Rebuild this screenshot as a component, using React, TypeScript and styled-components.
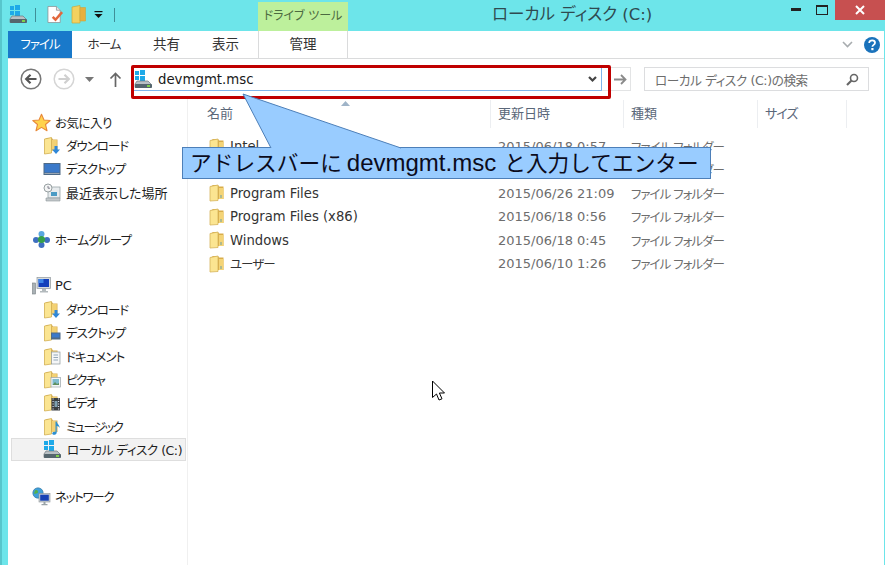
import React from "react";
import styled, { createGlobalStyle } from "styled-components";

const GlobalStyle = createGlobalStyle`
  html, body {
    margin: 0;
    padding: 0;
    overflow: hidden;
    background: #6de5ea;
  }
  body {
    font-family: "DejaVu Sans", "Noto Sans CJK JP", sans-serif;
    font-feature-settings: "palt";
    font-size: 13px;
    color: #222;
  }
  svg {
    flex: none;
  }
`;

const Page = styled.div`
  position: relative;
  width: 885px;
  height: 565px;
  box-sizing: border-box;
  border-left: 2px solid #57c6cc;
  background: #6de5ea;
  display: flex;
  flex-direction: column;
  overflow: hidden;
`;

const TitleBar = styled.div`
  height: 31px;
  flex: none;
  display: flex;
  align-items: flex-start;
  position: relative;
`;

const QuickAccess = styled.div`
  width: 256px;
  height: 29px;
  flex: none;
  display: flex;
  align-items: center;
  padding-left: 7px;
  box-sizing: border-box;
`;

const QuickSeparator = styled.span<{ $ml: number; $mr: number }>`
  width: 1px;
  height: 14px;
  background: #3f8f98;
  margin-left: ${({ $ml }) => $ml}px;
  margin-right: ${({ $mr }) => $mr}px;
`;

const QuickGap = styled.span<{ $w: number }>`
  width: ${({ $w }) => $w}px;
`;

const ContextTab = styled.div`
  width: 90px;
  height: 29px;
  margin-top: 2px;
  background: #bdf09c;
  color: #4c6a40;
  font-size: 12px;
  text-align: center;
  line-height: 28px;
`;

const Title = styled.div`
  width: 161px;
  margin-left: 144px;
  font-size: 16.5px;
  line-height: 30px;
  color: #2f4a50;
  white-space: nowrap;
`;

const CaptionGroup = styled.div`
  margin-left: auto;
  display: flex;
  align-items: flex-start;
`;

const CaptionButton = styled.div<{ $w: number; $close?: boolean }>`
  width: ${({ $w }) => $w}px;
  height: 20px;
  display: flex;
  align-items: center;
  justify-content: center;
  background: ${({ $close }) => ($close ? "#c75050" : "transparent")};
`;

const Body = styled.div`
  flex: 1;
  margin-left: 6px;
  margin-right: 1px;
  background: #fff;
  display: flex;
  flex-direction: column;
  min-height: 0;
`;

const TabStrip = styled.div`
  height: 27px;
  flex: none;
  display: flex;
  align-items: stretch;
  border-bottom: 1px solid #dadbdc;
  padding-right: 4px;
`;

const Tab = styled.div<{ $w: number; $tight?: number; $active?: boolean; $context?: boolean }>`
  width: ${({ $w }) => $w}px;
  flex: none;
  text-align: center;
  line-height: 27px;
  font-size: ${({ $tight }) => ($tight ? 12.5 : 13.5)}px;
  letter-spacing: ${({ $tight }) => $tight ?? 0}px;
  box-sizing: border-box;
  color: ${({ $active }) => ($active ? "#fff" : "#333")};
  background: ${({ $active }) => ($active ? "#1979ca" : "transparent")};
  margin-left: ${({ $context }) => ($context ? 4 : 0)}px;
  border-left: ${({ $context }) => ($context ? "1px solid #dadbdc" : "none")};
  border-right: ${({ $context }) => ($context ? "1px solid #dadbdc" : "none")};
`;

const TabTools = styled.div`
  margin-left: auto;
  display: flex;
  align-items: center;
  gap: 11px;
`;

const Toolbar = styled.div`
  height: 40px;
  flex: none;
  display: flex;
  align-items: center;
  padding-left: 12px;
`;

const NavIcon = styled.span<{ $w: number; $mr: number }>`
  width: ${({ $w }) => $w}px;
  margin-right: ${({ $mr }) => $mr}px;
  flex: none;
  display: flex;
  justify-content: center;
`;

const AddressBox = styled.div`
  position: relative;
  width: 470px;
  height: 24px;
  box-sizing: border-box;
  border: 1px solid #7eb4ea;
  flex: none;
  display: flex;
  align-items: center;
  padding-left: 1px;
  font-size: 13.3px;
  color: #1a1a1a;
`;

const AddressText = styled.span`
  margin-left: 5px;
`;

const AddressChevron = styled.span`
  margin-left: auto;
  margin-right: 4px;
  display: flex;
`;

const RedFrame = styled.div`
  position: absolute;
  left: -2px;
  top: -3px;
  width: 480px;
  height: 34px;
  box-sizing: border-box;
  border: 3.5px solid #c00000;
  border-radius: 2px;
`;

const GoButton = styled.div`
  width: 29px;
  height: 24px;
  flex: none;
  box-sizing: border-box;
  border: 1px solid #e3e4e5;
  border-left: none;
  display: flex;
  align-items: center;
  justify-content: flex-end;
  padding-right: 3px;
`;

const SearchBox = styled.div`
  width: 225px;
  height: 24px;
  margin-left: 13px;
  flex: none;
  box-sizing: border-box;
  border: 1px solid #dcdddf;
  display: flex;
  align-items: center;
  justify-content: space-between;
  padding: 0 9px 0 10px;
  color: #6d6d6d;
  font-size: 12.6px;
  letter-spacing: -0.4px;
  white-space: nowrap;
`;

const Content = styled.div`
  flex: 1;
  display: flex;
  min-height: 0;
`;

const NavPane = styled.div`
  width: 180px;
  flex: none;
  border-right: 1px solid #f0f0f0;
  padding-top: 11.5px;
  box-sizing: border-box;
`;

const NavRow = styled.div<{ $level?: number; $selected?: boolean }>`
  height: 23.4px;
  box-sizing: border-box;
  display: flex;
  align-items: center;
  gap: ${({ $level }) => ($level ? 5 : 4)}px;
  margin-left: 3px;
  margin-right: 1px;
  padding-left: ${({ $level }) => ($level ? 32 : 21)}px;
  white-space: nowrap;
  color: #1e1e1e;
  background: ${({ $selected }) => ($selected ? "#f2f2f2" : "transparent")};
  outline: ${({ $selected }) => ($selected ? "1px solid #dedede" : "none")};
  outline-offset: -1px;
`;

const NavLabel = styled.span<{ $tight?: number }>`
  font-size: ${({ $tight }) => ($tight ? 12.5 : 13)}px;
  letter-spacing: ${({ $tight }) => $tight ?? 0}px;
`;

const NavGap = styled.div`
  height: 23.4px;
`;

const FileArea = styled.div`
  flex: 1;
  min-width: 0;
`;

const columns = "303px 133px 134px 89px";

const HeaderRow = styled.div`
  position: relative;
  display: grid;
  grid-template-columns: ${columns};
  height: 27px;
  margin-top: 1px;
  color: #5a6779;
  font-size: 13px;
`;

const HeaderCell = styled.div<{ $first?: boolean; $tight?: boolean }>`
  padding-left: ${({ $first }) => ($first ? 19 : 7)}px;
  line-height: 28px;
  letter-spacing: ${({ $tight }) => ($tight ? -1 : 0)}px;
  border-right: 1px solid #eceef1;
`;

const SortArrow = styled.svg`
  position: absolute;
  left: 153px;
  top: 1px;
`;

const FileRows = styled.div`
  padding-top: 7.9px;
`;

const FileRow = styled.div`
  display: grid;
  grid-template-columns: ${columns};
  height: 23.4px;
  align-items: center;
  white-space: nowrap;
`;

const NameCell = styled.div`
  display: flex;
  align-items: center;
  gap: 5px;
  padding-left: 21px;
  color: #333;
  font-size: 13.2px;
`;

const KanaName = styled.span`
  font-size: 12.5px;
  letter-spacing: -1px;
`;

const DateCell = styled.div`
  padding-left: 7px;
  color: #6d6d6d;
`;

const TypeCell = styled(DateCell)`
  font-size: 12.5px;
  letter-spacing: -1px;
`;

const Callout = styled.div`
  position: absolute;
  left: 180px;
  top: 147px;
  width: 529px;
  height: 32px;
  box-sizing: border-box;
  border: 1px solid #4d7fb8;
  background: #99ccff;
  color: #0b0b1c;
  font-family: "Liberation Sans", "Noto Sans CJK JP", sans-serif;
  font-feature-settings: normal;
  font-size: 21.7px;
  line-height: 29px;
  padding-left: 7px;
  white-space: nowrap;
`;

const CalloutLatin = styled.span`
  font-size: 24px;
  padding: 0 8px 0 5px;
`;

const CalloutTail = styled.svg`
  position: absolute;
  left: 58px;
  top: -55px;
  overflow: visible;
`;

const Cursor = styled.svg`
  position: absolute;
  left: 429px;
  top: 380px;
`;

const Windows = ({ x = 0, y = 0, s = 4 }: { x?: number; y?: number; s?: number }) => (
  <g fill="#1ea9e8">
    <rect x={x} y={y} width={s} height={s} />
    <rect x={x + s + 1} y={y - 1} width={s + 1} height={s + 1} />
    <rect x={x} y={y + s + 1} width={s} height={s} />
    <rect x={x + s + 1} y={y + s + 1} width={s + 1} height={s + 1} />
  </g>
);

const DriveIcon = () => (
  <svg width="19" height="19" viewBox="0 0 19 19">
    <Windows x={1} y={1} s={4} />
    <path d="M3 11h11l3 3v3.5H1V14z" fill="#b9c0c4" stroke="#6d777c" strokeWidth=".7" />
    <rect x="1" y="14" width="17" height="4" rx="1" fill="#55666e" />
    <rect x="13" y="15" width="3" height="2" fill="#7fd04b" />
  </svg>
);

const FolderIcon = ({ children }: { children?: React.ReactNode }) => (
  <svg width="18" height="19" viewBox="0 0 18 19">
    <path d="M2 3.500 4 2h5l1 1.500h4.500V15H2z" fill="#d9ae52" />
    <path d="M1.500 3 8.500 1.500v15.500L1.500 18z" fill="#fbe592" stroke="#d2ae52" strokeWidth=".8" />
    <path d="M9 4h4.800v11H9z" fill="#f3d173" />
    {children}
  </svg>
);

const FileFolder = () => (
  <svg width="16" height="18" viewBox="0 0 16 18">
    <path d="M2 2.500 4 1h5l1 1.500h4.500V15H2z" fill="#d9ad4a" />
    <path d="M1 2.500 9 1v15.500L1 17z" fill="#fbe591" stroke="#d6b45c" strokeWidth=".8" />
    <path d="M10 4h4.500v11H10z" fill="#f4d477" />
    <rect x="11.500" y="11" width="1" height="3" fill="#6aa0a8" />
  </svg>
);

const StarIcon = () => (
  <svg width="19" height="19" viewBox="0 0 19 19">
    <path d="M9.500 1.200 12 7l6.200.5-4.700 4 1.500 6.200-5.500-3.300L4 17.700l1.500-6.200-4.700-4L7 7z" fill="#ffd34d" stroke="#e8893a" strokeWidth="1.100" strokeLinejoin="round" />
  </svg>
);

const DesktopIcon = () => (
  <svg width="18" height="19" viewBox="0 0 18 19">
    <rect x="0.500" y="4" width="17" height="12" fill="#4e6a86" />
    <rect x="1.500" y="5" width="15" height="8.500" fill="#3b79c9" />
    <rect x="1.500" y="14" width="15" height="1" fill="#9aa6b2" />
  </svg>
);

const RecentIcon = () => (
  <svg width="18" height="19" viewBox="0 0 18 19">
    <rect x="5" y="4" width="12" height="11" fill="#e8ecee" stroke="#9aa5a8" strokeWidth=".8" />
    <rect x="8" y="9" width="6" height="4" fill="#4b9bc4" />
    <circle cx="5" cy="5" r="4" fill="#f3f4f4" stroke="#8d9699" strokeWidth=".9" />
    <path d="M5 3v2.200h2" fill="none" stroke="#667" strokeWidth=".8" />
    <path d="M3 15h14v3H3z" fill="#c3c8ca" stroke="#8f979a" strokeWidth=".6" />
  </svg>
);

const HomeGroupIcon = () => (
  <svg width="19" height="19" viewBox="0 0 19 19">
    <circle cx="9.500" cy="4" r="3" fill="#5aa7e0" />
    <circle cx="4" cy="10" r="3" fill="#3e6fc0" />
    <circle cx="15" cy="10" r="3" fill="#3e6fc0" />
    <circle cx="9.500" cy="15" r="3" fill="#3e6fc0" />
    <circle cx="9.500" cy="9.500" r="3.600" fill="#35a04a" />
  </svg>
);

const PcIcon = () => (
  <svg width="19" height="19" viewBox="0 0 19 19">
    <rect x="0.500" y="7" width="3" height="11" fill="#a9b1b5" stroke="#777f83" strokeWidth=".6" />
    <rect x="5" y="1.500" width="13.500" height="11" fill="#d8dcdf" stroke="#90989c" strokeWidth=".7" />
    <rect x="6.500" y="3" width="10.500" height="8" fill="#1440bb" />
    <rect x="6.500" y="3" width="5" height="4" fill="#3e86e8" />
    <path d="M10 13h4v2h2v1.500H8V15h2z" fill="#b3babd" />
  </svg>
);

const NetworkIcon = () => (
  <svg width="19" height="19" viewBox="0 0 19 19">
    <circle cx="6" cy="6" r="5.200" fill="#3f9fd8" stroke="#2d6f9c" strokeWidth=".6" />
    <path d="M3 3.500c2-1 3 0 3 1.500S3.500 7 2 6.500zM7 7.500l3-1 .5 3-3 1z" fill="#56b04a" />
    <rect x="7" y="6.500" width="11" height="8.500" fill="#ccd2d5" stroke="#8a9296" strokeWidth=".6" />
    <rect x="8.200" y="7.700" width="8.600" height="6" fill="#1742b5" />
    <path d="M11.500 15h2v2h2v1.200h-6V17h2z" fill="#9aa3a7" />
  </svg>
);

const DownloadOverlay = () => (
  <path d="M11.500 10h3v3.500H17L13 18l-4-4.500h2.500z" fill="#2f87d8" />
);
const DesktopOverlay = () => (
  <g>
    <rect x="8" y="9.500" width="9.500" height="7" fill="#4e6a86" />
    <rect x="9" y="10.500" width="7.500" height="4" fill="#3b79c9" />
  </g>
);
const DocOverlay = () => (
  <g>
    <rect x="8.500" y="5" width="8.500" height="12" fill="#f5f6f7" stroke="#8e979c" strokeWidth=".7" />
    <path d="M10.500 8h4.500M10.500 10.500h4.500M10.500 13h4.500" stroke="#8ba0b0" strokeWidth=".9" />
  </g>
);
const PictureOverlay = () => (
  <g>
    <rect x="8" y="7.500" width="9.500" height="9.500" fill="#f4f6f7" stroke="#9aa3a8" strokeWidth=".7" />
    <rect x="9.500" y="9" width="6.500" height="6" fill="#7fbccf" />
    <path d="M9.500 15l2.500-3 2 2 2-1v2z" fill="#5f8f5f" />
  </g>
);
const VideoOverlay = () => (
  <g>
    <rect x="8.500" y="5" width="8.500" height="12.500" fill="#3a3f42" />
    <path d="M9.500 6h1.200M9.500 8.500h1.200M9.500 11h1.200M9.500 13.500h1.200M9.500 16h1.200M15 6h1.200M15 8.500h1.200M15 11h1.200M15 13.500h1.200M15 16h1.200" stroke="#dde" strokeWidth="1" />
    <rect x="11.500" y="8" width="3" height="6" fill="#7ea0b0" />
  </g>
);
const MusicOverlay = () => (
  <path d="M12.500 4.500h1.200c.3 2.500 3 3.500 3 6.500-.7-1.200-1.500-1.800-3-2v6.500c0 1.700-2 2.700-3.500 2.200-1.600-.6-1.200-2.700.8-3 .6-.1 1-.1 1.500.1z" fill="#2d8fd0" />
);

const rows = [
  { name: "Intel", date: "2015/06/18 0:57" },
  { name: "PerfLogs", date: "2013/08/22 23:52" },
  { name: "Program Files", date: "2015/06/26 21:09" },
  { name: "Program Files (x86)", date: "2015/06/18 0:56" },
  { name: "Windows", date: "2015/06/18 0:45" },
  { name: "ユーザー", date: "2015/06/10 1:26", kana: true },
];

const App = () => (
  <Page>
    <GlobalStyle />
    <TitleBar>
      <QuickAccess>
        <DriveIcon />
        <QuickSeparator $ml={7} $mr={11} />
        <svg width="17" height="19" viewBox="0 0 18 19">
          <path d="M1 1h9l4 4v13H1z" fill="#fff" stroke="#8a8f92" strokeWidth=".8" />
          <path d="M10 1v4h4" fill="#e6e8ea" stroke="#8a8f92" strokeWidth=".8" />
          <path d="M6 12l3 3 7-8" fill="none" stroke="#e2673c" strokeWidth="2.600" />
        </svg>
        <QuickGap $w={7} />
        <svg width="16" height="19" viewBox="0 0 16 19">
          <path d="M1 2 9 0.500v17.500L1 18z" fill="#f3d15f" stroke="#c9a63d" strokeWidth=".7" />
          <path d="M9 2.500h5.500V16H9z" fill="#e7b03f" stroke="#c9a63d" strokeWidth=".6" />
        </svg>
        <QuickGap $w={6} />
        <svg width="11" height="10" viewBox="0 0 11 10">
          <rect x="1.500" y="1" width="8" height="1.200" fill="#111" />
          <path d="M1.500 4h8l-4 4z" fill="#111" />
        </svg>
        <QuickSeparator $ml={10} $mr={0} />
      </QuickAccess>
      <ContextTab>ドライブ ツール</ContextTab>
      <Title>ローカル ディスク (C:)</Title>
      <CaptionGroup>
        <CaptionButton $w={27}>
          <svg width="10" height="4" viewBox="0 0 10 4"><rect width="10" height="3" fill="#222" /></svg>
        </CaptionButton>
        <CaptionButton $w={26}>
          <svg width="12" height="10" viewBox="0 0 12 10"><rect x=".5" y=".5" width="11" height="9" fill="none" stroke="#222" /><rect width="12" height="2" fill="#222" /></svg>
        </CaptionButton>
        <CaptionButton $w={50} $close>
          <svg width="10" height="10" viewBox="0 0 10 10"><path d="M1 1l8 8M9 1l-8 8" stroke="#fff" strokeWidth="2" /></svg>
        </CaptionButton>
      </CaptionGroup>
    </TitleBar>
    <Body>
      <TabStrip>
        <Tab $w={64} $active $tight={-1}>ファイル</Tab>
        <Tab $w={64} $tight={-1}>ホーム</Tab>
        <Tab $w={61}>共有</Tab>
        <Tab $w={57}>表示</Tab>
        <Tab $w={90} $context>管理</Tab>
        <TabTools>
          <svg width="11" height="7" viewBox="0 0 11 7"><path d="M1 1l4.500 4.500L10 1" fill="none" stroke="#a8acaf" strokeWidth="1.600" /></svg>
          <svg width="16" height="16" viewBox="0 0 16 16">
            <circle cx="8" cy="8" r="8" fill="#1a72bb" />
            <path d="M5.200 6c0-1.700 1.300-2.700 3-2.700s2.800 1 2.800 2.400c0 2.200-2.600 2.100-2.600 4" fill="none" stroke="#fff" strokeWidth="1.800" />
            <rect x="7.300" y="11" width="2.200" height="2.200" fill="#fff" />
          </svg>
        </TabTools>
      </TabStrip>
      <Toolbar>
        <NavIcon $w={22} $mr={11}>
          <svg width="22" height="22" viewBox="0 0 22 22">
            <circle cx="11" cy="11" r="9.800" fill="#fff" stroke="#777" strokeWidth="1.500" />
            <path d="M16.500 11H7M10.500 6.800 6.200 11l4.300 4.200" fill="none" stroke="#555" strokeWidth="2.200" />
          </svg>
        </NavIcon>
        <NavIcon $w={22} $mr={8}>
          <svg width="22" height="22" viewBox="0 0 22 22">
            <circle cx="11" cy="11" r="9.800" fill="#fff" stroke="#d5d5d5" strokeWidth="1.500" />
            <path d="M5.500 11H15M11.500 6.800l4.300 4.200-4.300 4.200" fill="none" stroke="#d0d0d0" strokeWidth="2.200" />
          </svg>
        </NavIcon>
        <NavIcon $w={12} $mr={13}>
          <svg width="9" height="5" viewBox="0 0 9 5"><path d="M0 0h9L4.500 5z" fill="#777" /></svg>
        </NavIcon>
        <NavIcon $w={14} $mr={10}>
          <svg width="13" height="15" viewBox="0 0 13 15">
            <path d="M6.500 15V2M1.500 6.500l5-5 5 5" fill="none" stroke="#666" strokeWidth="1.700" />
          </svg>
        </NavIcon>
        <AddressBox>
          <DriveIcon />
          <AddressText>devmgmt.msc</AddressText>
          <AddressChevron>
            <svg width="9" height="7" viewBox="0 0 9 7"><path d="M1 1l3.500 3.500L8 1" fill="none" stroke="#444" strokeWidth="2.200" /></svg>
          </AddressChevron>
          <RedFrame />
        </AddressBox>
        <GoButton>
          <svg width="13" height="11" viewBox="0 0 13 11"><path d="M0 5.500h11M7 1l4.500 4.500L7 10" fill="none" stroke="#8a8a8a" strokeWidth="1.800" /></svg>
        </GoButton>
        <SearchBox>
          <span>ローカル ディスク (C:)の検索</span>
          <svg width="13" height="13" viewBox="0 0 13 13">
            <circle cx="8" cy="5" r="3.500" fill="none" stroke="#666" strokeWidth="1.600" />
            <path d="M5.500 7.500 1 12" stroke="#666" strokeWidth="2.200" />
          </svg>
        </SearchBox>
      </Toolbar>
      <Content>
        <NavPane>
          <NavRow><StarIcon /><NavLabel $tight={-0.5}>お気に入り</NavLabel></NavRow>
          <NavRow $level={1}><FolderIcon><DownloadOverlay /></FolderIcon><NavLabel $tight={-1}>ダウンロード</NavLabel></NavRow>
          <NavRow $level={1}><DesktopIcon /><NavLabel $tight={-1}>デスクトップ</NavLabel></NavRow>
          <NavRow $level={1}><RecentIcon /><NavLabel>最近表示した場所</NavLabel></NavRow>
          <NavGap />
          <NavRow><HomeGroupIcon /><NavLabel $tight={-0.8}>ホームグループ</NavLabel></NavRow>
          <NavGap />
          <NavRow><PcIcon /><NavLabel>PC</NavLabel></NavRow>
          <NavRow $level={1}><FolderIcon><DownloadOverlay /></FolderIcon><NavLabel $tight={-1}>ダウンロード</NavLabel></NavRow>
          <NavRow $level={1}><FolderIcon><DesktopOverlay /></FolderIcon><NavLabel $tight={-1}>デスクトップ</NavLabel></NavRow>
          <NavRow $level={1}><FolderIcon><DocOverlay /></FolderIcon><NavLabel $tight={-0.9}>ドキュメント</NavLabel></NavRow>
          <NavRow $level={1}><FolderIcon><PictureOverlay /></FolderIcon><NavLabel $tight={-1.5}>ピクチャ</NavLabel></NavRow>
          <NavRow $level={1}><FolderIcon><VideoOverlay /></FolderIcon><NavLabel $tight={-1.5}>ビデオ</NavLabel></NavRow>
          <NavRow $level={1}><FolderIcon><MusicOverlay /></FolderIcon><NavLabel $tight={-1.7}>ミュージック</NavLabel></NavRow>
          <NavRow $level={1} $selected><DriveIcon /><NavLabel $tight={-0.45}>ローカル ディスク (C:)</NavLabel></NavRow>
          <NavGap />
          <NavRow><NetworkIcon /><NavLabel $tight={-1.3}>ネットワーク</NavLabel></NavRow>
        </NavPane>
        <FileArea>
          <HeaderRow>
            <HeaderCell $first>名前</HeaderCell>
            <HeaderCell>更新日時</HeaderCell>
            <HeaderCell>種類</HeaderCell>
            <HeaderCell $tight>サイズ</HeaderCell>
            <SortArrow width="9" height="5" viewBox="0 0 9 5"><path d="M0 5 4.500 0 9 5z" fill="#9fb4c8" /></SortArrow>
          </HeaderRow>
          <FileRows>
            {rows.map((row) => (
              <FileRow key={row.name}>
                <NameCell><FileFolder />{row.kana ? <KanaName>{row.name}</KanaName> : row.name}</NameCell>
                <DateCell>{row.date}</DateCell>
                <TypeCell>ファイル フォルダー</TypeCell>
              </FileRow>
            ))}
          </FileRows>
        </FileArea>
      </Content>
    </Body>
    <Callout>
      <CalloutTail width="132" height="56" viewBox="0 0 132 56">
        <path d="M2 1 30 55H160z" fill="#99ccff" />
        <path d="M30 55 2 1l158 54" fill="none" stroke="#4d7fb8" strokeWidth="1" />
      </CalloutTail>
      アドレスバーに<CalloutLatin>devmgmt.msc</CalloutLatin>と入力してエンター
    </Callout>
    <Cursor width="16" height="24" viewBox="0 0 16 24">
      <path d="M1.500 1v16.500l4-3.500 2.500 6 3-1.200-2.600-5.800h5.100z" fill="#fff" stroke="#000" strokeWidth="1" />
    </Cursor>
  </Page>
);

export default App;
